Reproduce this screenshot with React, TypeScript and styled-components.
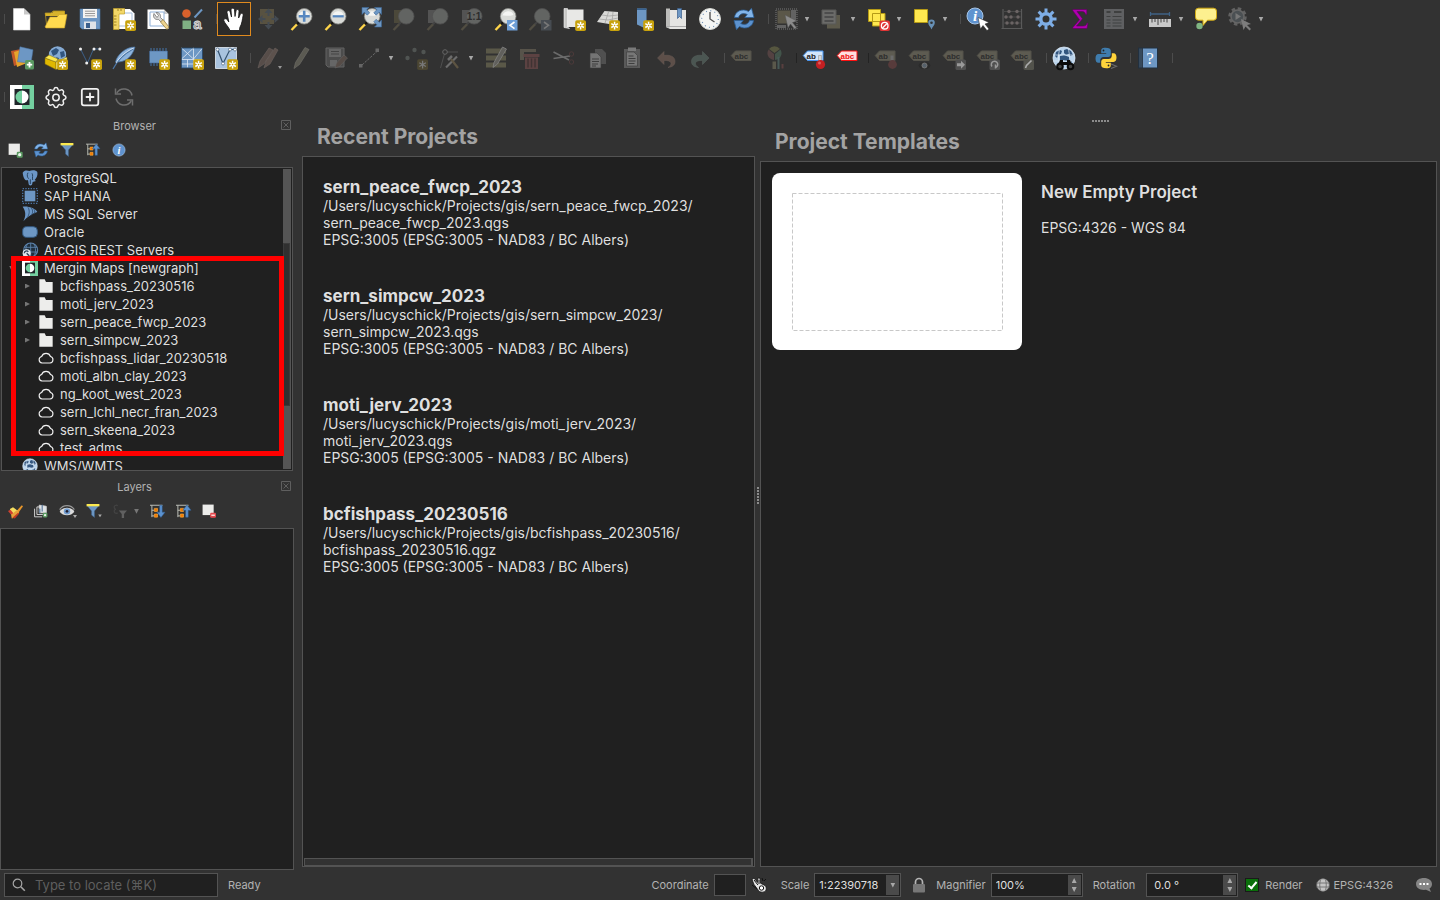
import React from "react";
import styled, { createGlobalStyle, css } from "styled-components";

const color = {
  window: "#323232",
  base: "#202020",
  line: "#535353",
  text: "#dfdfdf",
  label: "#b2b2b2",
  heading: "#a3a3a3",
  blue: "#6d97c4",
  navy: "#3a5f8c",
  gold: "#c8a20c",
};

const GlobalStyle = createGlobalStyle`
  *, *::before, *::after { box-sizing: border-box; }
  html, body { margin: 0; padding: 0; background: ${color.window}; }
  body { font-family: Inter, "Liberation Sans", sans-serif; color: ${color.text}; }
  button, input, select { font: inherit; color: inherit; margin: 0; }
  h2, h3, p, ul { margin: 0; padding: 0; }
`;

/* ---------- shared drawing parts ---------- */

const NewBadge = () => (
  <g>
    <rect x="13.2" y="13.2" width="10.8" height="10.8" rx="1.8" fill={color.gold} />
    <path d="M18.6 14.8v7.6M15.3 16.7l6.6 3.8M21.9 16.7l-6.6 3.8" stroke="#fff" strokeWidth="1.5" />
    <circle cx="18.6" cy="18.6" r=".8" fill={color.gold} />
  </g>
);

const Lens = ({ dim, children }: { dim?: boolean; children?: React.ReactNode }) => (
  <g>
    <path d="M1.5 23l5.8-6" stroke={dim ? "#514d42" : "#ffd54a"} strokeWidth="2.4" />
    <path d="M6.8 17.4l2.2-2.2" stroke={dim ? "#444" : "#111"} strokeWidth="2" />
    <circle cx="14.2" cy="9.3" r="7.8" fill={dim ? "#626462" : "#d9dbd8"} stroke={dim ? "#525252" : "#8a8c88"} strokeWidth=".8" />
    {!dim && <path d="M8.5 8.5a6 6 0 0 1 11-1c-3 2.600-7 .6-11 1z" fill="#f4f5f3" />}
    {children}
  </g>
);

const Tag = ({ fill, stroke, ink, word = "abc" }: { fill: string; stroke: string; ink: string; word?: string }) => (
  <g>
    <path d="M1.200 9.600L5.500 5h15.500v9.500h-15.500z" fill={fill} stroke={stroke} />
    <text x="4.500" y="12.500" fontFamily="Liberation Sans, sans-serif" fontWeight="700" fontSize="8" fill={ink}>{word}</text>
  </g>
);

const DimTag = ({ word }: { word?: string }) => <Tag fill="#5d5b51" stroke="#55534a" ink="#2e2e2e" word={word} />;

const MerginMark = () => (
  <g>
    <path d="M0 0h12v24H0z" fill="#fff" />
    <path d="M12 0h12v24H12z" fill="#74d0a0" />
    <path d="M4.500 4h15v16h-15z" fill="#20262a" />
    <path d="M12 5.500a6.500 6.500 0 0 0 0 13z" fill="#74d0a0" />
    <path d="M12 5.500a6.500 6.500 0 0 1 0 13z" fill="#fff" />
  </g>
);

const RefreshMark = () => (
  <g>
    <path d="M2.500 10.500C3 4.500 10 .8 16.500 4.500l3-3.200 2.500 9.200h-9.200l2.500-3C11 5.500 7.500 7 6.500 10.500z" fill="#82b4e8" stroke="#2c5f97" strokeWidth=".8" />
    <path d="M21.500 13.500C21 19.500 14 23.200 7.500 19.500l-3 3.200L2 13.500h9.200l-2.500 3c4.300 2 7.800.5 8.800-3z" fill="#5c92cf" stroke="#2c5f97" strokeWidth=".8" />
  </g>
);

const Globe = () => (
  <g>
    <circle cx="12" cy="12" r="11" fill="#b9d3ec" stroke="#d8e6f4" strokeWidth=".8" />
    <path d="M4 6l4-2 2 1-1 3-3 1-1 3-2-2zM12 4l3-1 4 2 2 4-3 1-1-2-3 1-2-2zM8 10l4-1 5 2 1 3-4 1-3-1-3 1zM16 17l4-2-1 4-3 1zM6 16l3 1 1 3-3-1z" fill="#33567f" />
    <path d="M1.500 9h21M1.500 15h21M8 2c-2 6-2 14 0 20M16 2c2 6 2 14 0 20" fill="none" stroke="#dce9f6" strokeWidth=".7" />
  </g>
);

const InfoMark = () => (
  <g>
    <circle cx="12" cy="12" r="10.500" fill="#5f93cf" stroke="#a9c6e6" strokeWidth="1" />
    <text x="12" y="18" textAnchor="middle" fontFamily="Liberation Serif, serif" fontStyle="italic" fontWeight="700" fontSize="18" fill="#fff">i</text>
  </g>
);

const FilterMark = () => (
  <g>
    <path d="M2 3h20l-7.500 9v11l-5-4v-7z" fill={color.blue} stroke={color.navy} strokeWidth=".8" />
    <path d="M1 0h22v4H1z" fill="#fce94f" />
  </g>
);

const TreeArrow = ({ down }: { down?: boolean }) => (
  <g>
    <path d="M0 2h20M3 2v19M3 10h4M3 19h4" stroke="#babdb6" strokeWidth="1.600" fill="none" />
    <path d="M7 7h5v5H7zM7 16h5v5H7z" fill="#f57900" stroke="#fcaf3e" />
    <path
      d={down ? "M15.500 2h4v11h4.500l-6.500 8.500L11 13h4.500z" : "M15.500 21h4V10h4.500l-6.500-8.500L11 10h4.500z"}
      fill="#5c92cf"
      stroke="#2f5f96"
      strokeWidth=".8"
    />
  </g>
);

const glyphs: Record<string, React.ReactNode> = {
  newFile: (
    <g>
      <path d="M3.500 1.500H14l6 6V23H3.500z" fill="#fff" stroke="#dcdcdc" strokeWidth=".6" />
      <path d="M14 1.500l6 6h-6z" fill="#c9c9c9" />
    </g>
  ),
  open: (
    <g>
      <path d="M1 6h7l1.500-2H21v5H1z" fill="#d8b32c" />
      <path d="M3 21L1.200 6H7l2-2h11.500v4" fill="none" stroke="#b3931f" strokeWidth=".8" />
      <path d="M1 20L6 10h7l2.500-2.500H23L20.500 21H2z" fill="#ffda4f" stroke="#c9a227" strokeWidth=".6" />
    </g>
  ),
  save: (
    <g>
      <path d="M2 2h20v20H4l-2-2z" fill={color.blue} stroke="#4a75a6" strokeWidth=".6" />
      <path d="M5 2h14v9H5z" fill="#f3f3f1" />
      <path d="M7 4.200h10M7 6.500h10M7 8.800h10" stroke="#999" />
      <path d="M6 14.500h12V22H6z" fill="#dfe3e8" />
      <path d="M8 16h4v5H8z" fill={color.navy} />
    </g>
  ),
  newLayout: (
    <g>
      <path d="M2 2h16l4.500 4.500V22H2z" fill="#fff" />
      <path d="M5 6h15v13H5z" fill="none" stroke="#a7bedb" />
      <path d="M1.500 1.500h11V7H7v15.500H1.500z" fill="#f3d767" stroke="#c2a12a" strokeWidth=".7" />
      <path d="M6 2v2M9 2v2M2 9h2.500M2 12h2.500M2 15h2.500M2 18h2.500" stroke="#8a6d10" strokeWidth=".8" />
      <NewBadge />
    </g>
  ),
  layoutManager: (
    <g>
      <path d="M1.500 2.500H18l4.500 4.500v15h-21z" fill="#fff" />
      <path d="M18 2.500l4.500 4.500H18z" fill="#c9c9c9" />
      <path d="M4 5h14v14H4z" fill="none" stroke="#8fb0d8" />
      <path d="M8 6.500c-1.500 4 1 6.500 4.500 6l2.500 2.500 2-2-2.500-2.500c.5-3-1.500-5.500-4.500-5l2.500 3-1.500 2z" fill="#d7d7d7" stroke="#666" strokeWidth=".7" />
      <path d="M14.500 15l2.500-2.500 6 7.500-2 2.500z" fill="#eed48f" stroke="#8d7433" strokeWidth=".7" />
    </g>
  ),
  styleManager: (
    <g>
      <circle cx="6.500" cy="6.500" r="4.300" fill="#d8612c" />
      <path d="M14.500 10.500l7.500-8" stroke={color.blue} strokeWidth="2" />
      <path d="M2.500 13.500h8.500V22H2.500z" fill="#7fb083" />
      <text x="17.500" y="22" textAnchor="middle" fontFamily="Liberation Sans, sans-serif" fontWeight="700" fontSize="15" fill="#8a8a8a" stroke="#dedede" strokeWidth=".8">a</text>
    </g>
  ),
  hand: (
    <path
      d="M8 23.500C7 20 2.500 16.500 1.800 13.500 1.500 11.500 4 11 5.500 13L6.800 15 5 5.500C4.700 3.200 7.600 2.800 8.200 5L9.500 10 9 3c0-2.200 3.200-2.400 3.500-.2L13 9.500l1-5.700c.4-2 3.200-1.600 3 .6L16.600 11l1.700-3.700c.9-1.800 3.300-.8 2.800 1.300-.8 3.900-1.100 8.400-3.300 11.900l-.3 3z"
      fill="#fff"
      stroke="#141414"
      strokeWidth=".8"
    />
  ),
  panSelection: (
    <g>
      <path d="M4 2h14v15H4z" fill="#585241" />
      <path d="M12.500 4.500v15M5 12h15" stroke="#444b52" strokeWidth="2" />
      <path d="M8.500 6l4-4.500 4 4.500zM8.500 18l4 4.500 4-4.500zM6.500 8L2 12l4.500 4zM18.500 8l4.500 4-4.500 4z" fill="#444b52" />
      <path d="M9.500 9h6v6h-6z" fill="#585241" />
    </g>
  ),
  zoomIn: <Lens><path d="M14.200 3.800v11M8.700 9.300h11" stroke="#5687c0" strokeWidth="2.600" /></Lens>,
  zoomOut: <Lens><path d="M8.700 9.300h11" stroke="#5687c0" strokeWidth="2.200" /></Lens>,
  zoomFull: (
    <g>
      <Lens />
      <path
        d="M4 .5h7L8.700 2.800l3 3-2.400 2.400-3-3L4 7.500zM23.500.5v7l-2.300-2.300-3 3-2.400-2.400 3-3L16.500.5zM23.500 20h-7l2.300-2.300-3-3 2.400-2.400 3 3 2.300-2.300z"
        fill={color.blue}
        stroke="#3c6695"
        strokeWidth=".6"
      />
    </g>
  ),
  zoomSelection: <g><path d="M2 3h12v13H2z" fill="#4b483a" /><Lens dim /></g>,
  zoomLayer: <g><path d="M2 3h12v13H2z" fill="#535353" /><Lens dim /></g>,
  zoomNative: (
    <g>
      <path d="M2 3h12v13H2z" fill="#535353" />
      <Lens dim />
      <text x="14" y="12.500" textAnchor="middle" fontFamily="Liberation Sans, sans-serif" fontWeight="700" fontSize="10" fill="#2c2c2c">1:1</text>
    </g>
  ),
  zoomLast: (
    <g>
      <Lens />
      <path d="M13 13h10.500v10.500H13z" fill="#6f9fd6" />
      <path d="M20.500 15l-4.500 3.300 4.500 3.300" fill="none" stroke="#fff" strokeWidth="1.600" />
    </g>
  ),
  zoomNext: (
    <g>
      <Lens dim />
      <path d="M13 13h10.500v10.500H13z" fill="#474c52" />
      <path d="M16 15l4.500 3.300-4.500 3.300" fill="none" stroke="#777" strokeWidth="1.600" />
    </g>
  ),
  mapView: (
    <g>
      <path d="M4 2.500h17.500V20H4z" fill="#e8e8e6" />
      <path d="M2 1.500h3.500v18.500l2 1.500-5.500-1z" fill="#c8c8c6" stroke="#f5f5f5" strokeWidth=".6" />
      <NewBadge />
    </g>
  ),
  mapView3d: (
    <g>
      <path d="M1 15L8.500 4 22 5v10l-9 2z" fill="#d9d9d7" />
      <path d="M3 12l9 1 10-2M6 8l7 1 9-1M12.500 5L9 16M17 5l-1 11" stroke="#a5a5a3" strokeWidth=".8" fill="none" />
      <NewBadge />
    </g>
  ),
  bookmarkNew: <g><path d="M7 1.500h9.500V22L7 17.500z" fill={color.blue} /><path d="M7 1.500h9.500v1.500H7z" fill="#37618f" /><NewBadge /></g>,
  bookmarks: (
    <g>
      <path d="M2 3h20v19H6l-4-2z" fill="#e4e4e2" />
      <path d="M2 1.500h4V20l-2 1-2-1z" fill="#bcbcba" />
      <path d="M2 19.500h20" stroke="#aaa" />
      <path d="M13.500 1.500h4v10l-2-2-2 2z" fill={color.blue} stroke={color.navy} strokeWidth=".7" />
    </g>
  ),
  clock: (
    <g>
      <circle cx="12" cy="12" r="10.500" fill="#f5f6f4" stroke="#d5d7d3" />
      <circle cx="12" cy="12" r="8.300" fill="none" stroke="#6d8fb5" strokeWidth="1.200" strokeDasharray="1 3.350" />
      <path d="M12 5v7l4.500 3" fill="none" stroke="#555" strokeWidth="1.400" />
    </g>
  ),
  refresh: <RefreshMark />,
  select: (
    <g>
      <path d="M2 2h21v20H2z" fill="none" stroke="#777" strokeDasharray="1 1" />
      <path d="M3.500 3.500h13v13h-13z" fill="#5b5749" />
      <path d="M17 3h5v10h-5zM3 18h9v3H3z" fill="#626262" />
      <path d="M11 8l12 6-4.500 1.500 4 5-2 1.500-4-5-2.500 4z" fill="#8b8b8b" stroke="#555" strokeWidth=".5" />
    </g>
  ),
  selectForm: (
    <g>
      <path d="M7 8h13v13.500H7z" fill="#5d5a4c" />
      <path d="M2 3h14v14H2z" fill="#6b6b69" stroke="#595957" />
      <path d="M4.500 6h9M4.500 10h9M4.500 14h9" stroke="#444" strokeWidth="1.500" />
    </g>
  ),
  deselect: (
    <g>
      <path d="M2.500 2.500h12v12h-12zM6.500 6.500h12.500v12.500H6.500z" fill="#ffe84f" stroke="#b59a16" />
      <rect x="13.500" y="13.500" width="10.500" height="10.500" rx="2" fill="#e03535" />
      <circle cx="18.700" cy="18.700" r="3.300" fill="none" stroke="#fff" strokeWidth="1.300" />
      <path d="M16.500 21l4.500-4.500" stroke="#fff" strokeWidth="1.300" />
    </g>
  ),
  selectLocation: (
    <g>
      <path d="M2.500 2.500h13v13h-13z" fill="#ffe84f" stroke="#b59a16" />
      <path d="M19.500 22.500c-1-3-3.300-4.200-3.300-6.700a3.300 3.300 0 0 1 6.600 0c0 2.500-2.300 3.700-3.300 6.700z" fill="#6790b5" />
      <circle cx="19.500" cy="15.700" r="1.300" fill="#323232" />
    </g>
  ),
  identify: (
    <g>
      <circle cx="9" cy="9" r="8" fill="#5f93cf" stroke="#a9c6e6" strokeWidth="1" />
      <text x="9" y="14" textAnchor="middle" fontFamily="Liberation Serif, serif" fontStyle="italic" fontWeight="700" fontSize="15" fill="#fff">i</text>
      <path d="M12 10.500l11 5-4 1.500 4 5-2 1.500-4-5-2.500 3.500z" fill="#fff" stroke="#222" strokeWidth=".5" />
    </g>
  ),
  abacus: (
    <g>
      <path d="M3 2v20M21.500 2v20M1.500 21.500h21" stroke="#5a5a5a" strokeWidth="1.200" fill="none" />
      <path d="M3 4.500h18M3 10h18M3 16h18" stroke="#484848" />
      <g fill="#6b6464"><circle cx="9" cy="4.500" r="1.700" /><circle cx="17" cy="4.500" r="1.700" /><circle cx="6" cy="10" r="1.700" /><circle cx="11" cy="10" r="1.700" /><circle cx="18" cy="10" r="1.700" /><circle cx="7" cy="16" r="1.700" /><circle cx="12" cy="16" r="1.700" /><circle cx="17" cy="16" r="1.700" /></g>
    </g>
  ),
  gear: (
    <g>
      <circle cx="12" cy="12" r="5.300" fill="none" stroke="#7eaee6" strokeWidth="3.600" />
      <g stroke="#7eaee6" strokeWidth="3"><path d="M12 1.500v4M12 18.500v4M1.500 12h4M18.500 12h4M4.600 4.600l2.800 2.800M16.600 16.600l2.800 2.800M19.400 4.600l-2.800 2.800M7.400 16.600l-2.800 2.800" /></g>
    </g>
  ),
  sigma: <path d="M4.800 2.500h14v5h-1.300c-.3-2-1.200-3-3.500-3H9l5.500 7.300L8.500 19H15c2.500 0 3.500-1 4-3h1l-1 5.500H4.800V20.500L11.500 12.800 4.800 3.700z" fill="#b000b0" stroke="#5d005d" strokeWidth=".6" />,
  table: (
    <g>
      <path d="M2 2h20v20H2z" fill="#5f6062" />
      <path d="M4.500 5h4M12 5h7.500" stroke="#3f4040" strokeWidth="2" />
      <path d="M4.500 9.500h4M10.500 9.500h9M4.500 13h4M10.500 13h9M4.500 16h4M10.500 16h9M4.500 19h4M10.500 19h9" stroke="#3f4040" />
    </g>
  ),
  measure: (
    <g>
      <path d="M2.500 7h19M2.500 5v4M21.500 5v4" stroke="#3f6285" strokeWidth="1.300" />
      <path d="M1 12h22v8H1z" fill="#c9c9c9" />
      <path d="M4 12v3.500M7 12v3M10 12v6M13 12v3.500M16 12v3M19 12v3.500" stroke="#444" />
    </g>
  ),
  tips: (
    <g>
      <path d="M4.500 1.200h15a3 3 0 0 1 3 3v6a3 3 0 0 1-3 3h-6l-4.500 5.300v-5.300H4.500a3 3 0 0 1-3-3v-6a3 3 0 0 1 3-3z" fill="#fdf08f" stroke="#d2aa12" />
      <circle cx="5.500" cy="19" r="3.200" fill="#80b583" />
    </g>
  ),
  runAction: (
    <g>
      <circle cx="9.500" cy="9.500" r="8" fill="none" stroke="#626262" strokeWidth="2.500" strokeDasharray="3.500 2.780" />
      <circle cx="9.500" cy="9.500" r="6.500" fill="#4b5053" stroke="#666" strokeWidth="1.600" />
      <path d="M7.500 6l5.500 3.500-5.500 3.500z" fill="#777" />
      <path d="M13 12l10 5-4 1 4 4-1.500 1.500-4-4-2 3.500z" fill="#7d7d7d" />
    </g>
  ),

  dataSource: (
    <g>
      <path d="M1 5l10-2 2 14-9 3z" fill="#c4582a" />
      <path d="M4 6l10-3 3 14-10 4z" fill="#e6a52c" />
      <path d="M10 .8l13 3-2 13.500-13.500-1.500z" fill={color.blue} stroke="#4a75a6" strokeWidth=".5" />
      <rect x="15" y="14" width="9" height="9.500" rx="1.500" fill="#5a9a62" />
      <path d="M19.500 16v5.500M16.800 18.700h5.400" stroke="#fff" strokeWidth="1.800" />
    </g>
  ),
  geopackage: (
    <g>
      <circle cx="13.500" cy="9" r="8.700" fill="#86abd4" />
      <path d="M7 5l5-3 3 2-2 4-4 2zM16 6l4-1 1 5-4 2zM12 11l3 1-1 3z" fill="#31557f" />
      <path d="M1 12l11 4v7.500L1 18z" fill="#e0b800" stroke="#80690a" strokeWidth=".5" />
      <path d="M12 16l11-5v7l-11 5.500z" fill="#fff07a" stroke="#80690a" strokeWidth=".5" />
      <path d="M1 12l4-3 9 4-2 3z" fill="#fce94f" stroke="#80690a" strokeWidth=".5" />
      <NewBadge />
    </g>
  ),
  shapefile: (
    <g>
      <path d="M2.500 3l7 14 6-14h6" fill="none" stroke="#3c5f88" strokeWidth="1" />
      <g fill="#eee"><circle cx="2.500" cy="3" r="1.500" /><circle cx="8.700" cy="17" r="1.500" /><circle cx="16" cy="3" r="1.500" /><circle cx="21.800" cy="3" r="1.500" /></g>
      <NewBadge />
    </g>
  ),
  spatialite: (
    <g>
      <path d="M23 1C13 1 5 9 3.500 16c8 .5 16-3 19.500-15z" fill="#8db3dc" stroke="#48719f" strokeWidth=".7" />
      <path d="M21 3C12 8 5 15 1 23" fill="none" stroke="#4c76a4" strokeWidth="1.200" />
      <path d="M21.500 2C13 6 7 12 4 17" fill="none" stroke="#e7eff8" strokeWidth=".8" />
      <NewBadge />
    </g>
  ),
  memory: (
    <g>
      <path d="M5 2v18M8 2v18M11 2v18M14 2v18M17 2v18M20 2v18" stroke="#436a96" strokeWidth="1.200" />
      <path d="M3.500 5h18v12h-18z" fill={color.blue} stroke={color.navy} strokeWidth=".5" />
      <NewBadge />
    </g>
  ),
  mesh: (
    <g>
      <path d="M1.500 2h21v20h-21z" fill={color.blue} />
      <path d="M1.500 2l12 11M1.500 13L13.500 2M22.500 2l-9 11M13.500 2v20M1.500 13.500h21M1.500 18h12M7.500 13.500v8" stroke="#dfe9f4" strokeWidth=".8" />
      <path d="M1.500 2h21v20h-21z" fill="none" stroke="#244669" strokeWidth=".8" />
      <NewBadge />
    </g>
  ),
  virtual: (
    <g>
      <path d="M1.500 1.500h21v21h-21z" fill="#a9c3df" stroke="#e6eef6" strokeWidth=".8" />
      <path d="M3.500 3.500l5.500 14L16 3.500h5" fill="none" stroke="#34516f" strokeWidth="1.200" />
      <g fill="#fff" stroke="#34516f" strokeWidth=".6"><circle cx="3.500" cy="3.500" r="1.500" /><circle cx="9" cy="17.500" r="1.500" /><circle cx="16" cy="3.500" r="1.500" /><circle cx="21" cy="3.500" r="1.500" /></g>
      <NewBadge />
    </g>
  ),
  pencils: (
    <g>
      <path d="M2 22l2-7L13 2l4 2-9 14z" fill="#574d49" stroke="#6b625e" strokeWidth=".6" />
      <path d="M8 22l2-7L19 2l3 2-8 14z" fill="#5d524d" stroke="#6b625e" strokeWidth=".6" />
      <path d="M22 20h4l-2 3z" fill="#999" />
    </g>
  ),
  pencil: <path d="M4 22.500l1.500-6L15 1.500l4 2-9.500 15z" fill="#5b5a52" stroke="#6d6c66" strokeWidth=".7" />,
  saveEdits: (
    <g>
      <path d="M2 2h18v19H4l-2-2z" fill="#4c4c4c" stroke="#626262" />
      <path d="M5 3h12v8H5zM6 14h7v6H6z" fill="#666" />
      <path d="M7 5.500h8M7 8h8" stroke="#444" />
      <path d="M11 22l1.500-5L20 9l3.500 3-8 8.500z" fill="#564c47" stroke="#666" strokeWidth=".5" />
    </g>
  ),
  digitize: (
    <g>
      <path d="M4 19L20 4.500" stroke="#6b6b6b" strokeDasharray="2.500 1.200" />
      <path d="M1 18h3.500v3.500H1zM17.500 2.500H21V6h-3.500z" fill="#666" />
    </g>
  ),
  addPoint: (
    <g>
      <g fill="#505452"><circle cx="10.500" cy="4" r="2.200" /><circle cx="19.500" cy="6" r="2.200" /><circle cx="3.500" cy="12" r="2.200" /></g>
      <rect x="13.200" y="13.200" width="10.800" height="10.800" rx="1.800" fill="#4c4632" />
      <path d="M18.600 14.800v7.600M15.300 16.700l6.600 3.800M21.900 16.700l-6.600 3.800" stroke="#777" strokeWidth="1.300" />
    </g>
  ),
  vertexTool: (
    <g>
      <path d="M2.500 22L7 6h13" fill="none" stroke="#4f4f4f" />
      <circle cx="7" cy="6" r="2.300" fill="#323232" stroke="#666" />
      <path d="M8 21.500l11-11" fill="none" stroke="#6c6c6c" strokeWidth="2.200" />
      <path d="M13 13l7 9" stroke="#5d5442" strokeWidth="2.200" />
      <path d="M10 14l4-4" stroke="#6c6c6c" strokeWidth="2.500" />
    </g>
  ),
  attributes: (
    <g>
      <path d="M2 2.500h20v5H2zM2 9.500h20v5H2zM2 16.500h20v5H2z" fill="#5a5848" />
      <path d="M9 21.500l1-5L18.500 1l4 2-9 15z" fill="#61605c" stroke="#888" strokeWidth=".7" />
    </g>
  ),
  trash: (
    <g>
      <path d="M2 3h16v3H6v8H2z" fill="#57534a" />
      <path d="M5.500 8h16v3h-16zM7 11.500h13V23H7z" fill="#5c4242" />
      <path d="M10 12.500v9M13.500 12.500v9M17 12.500v9" stroke="#3f3333" strokeWidth="1.400" />
    </g>
  ),
  cut: (
    <g>
      <path d="M1.500 6L17 14M1.500 12.500L18 10" stroke="#6b6b6b" strokeWidth="1.600" />
      <circle cx="19.500" cy="8" r="2.200" fill="none" stroke="#4c3a3a" strokeWidth="1" />
      <circle cx="19.500" cy="16" r="2.200" fill="none" stroke="#4c3a3a" strokeWidth="1" />
    </g>
  ),
  copy: (
    <g>
      <path d="M9 3h7l4 4v11H9z" fill="#505050" />
      <path d="M4 7h7l4 4v11H4z" fill="#747474" stroke="#3b3b3b" strokeWidth=".6" />
      <path d="M6 13h7M6 15.500h7M6 18h6M6 20h4" stroke="#3e3e3e" />
    </g>
  ),
  paste: (
    <g>
      <path d="M4 3h16v19H4z" fill="#595959" />
      <path d="M8 1.500h8V5H8z" fill="#7a7a7a" />
      <path d="M6.500 6H14l3.500 3.500V20h-11z" fill="#777" stroke="#3b3b3b" strokeWidth=".6" />
      <path d="M8.500 10h5M8.500 12.500h7M8.500 15h7M8.500 17.500h6" stroke="#3e3e3e" />
    </g>
  ),
  undo: <path d="M3.500 12L10 5.500v4c6-1 11 1 11 6 0 4-3 5.500-7 6 5-3 4-7.500-4-7v4z" fill="#5d4f49" stroke="#6b5d57" strokeWidth=".5" />,
  redo: <path d="M21 12l-6.500-6.500v4c-6-1-11 1-11 6 0 4 3 5.500 7 6-5-3-4-7.500 4-7v4z" fill="#4b5652" stroke="#59635f" strokeWidth=".5" />,
  labelDim: <DimTag />,
  diagram: (
    <g>
      <path d="M5 3a7 7 0 0 1 11 0l-5.500 4z" fill="#56563f" />
      <path d="M4.500 3.500L10 8v6C4 13 2 8 4.500 3.500z" fill="#544242" />
      <path d="M16.500 3.500L11 8v6c6-1 8-6 5.500-10.500z" fill="#42544a" />
      <path d="M8.500 15.500h3.500V23H8.500z" fill="#5a584b" /><path d="M13.500 11h2v12h-2z" fill="#475a58" /><path d="M17.500 18h2v4.500h-2z" fill="#583f3f" />
    </g>
  ),
  labelPin: (
    <g>
      <Tag fill="#d3e6fb" stroke="#4794f0" ink="#222" word="ab" />
      <path d="M16.500 9.500h3V17h-3z" fill="#d8d8d8" stroke="#888" strokeWidth=".5" />
      <circle cx="18.500" cy="18.500" r="4.600" fill="#c41f22" />
      <circle cx="17.500" cy="17" r="1.500" fill="#dd5a5a" />
    </g>
  ),
  labelRed: <g><Tag fill="#ffdede" stroke="#ff1111" ink="#ee1111" /></g>,
  labelPinDim: (
    <g>
      <DimTag word="ab" />
      <path d="M16.500 9.500h3V17h-3z" fill="#6b6b6b" />
      <circle cx="18.500" cy="18.500" r="4.400" fill="#573b3b" />
    </g>
  ),
  labelShow: (
    <g>
      <DimTag />
      <ellipse cx="16.500" cy="19.500" rx="6" ry="3.500" fill="#2b2b2b" />
      <circle cx="16.500" cy="19.500" r="2.500" fill="#56616b" stroke="#777" />
    </g>
  ),
  labelMove: <g><DimTag /><rect x="13.500" y="13.500" width="10.500" height="10.500" rx="1.500" fill="#505050" /><path d="M15 17.200h4v-2.500l4 4-4 4v-2.500h-4z" fill="#999" /></g>,
  labelRotate: <g><DimTag /><rect x="13.500" y="13.500" width="10.500" height="10.500" rx="1.500" fill="#505050" /><path d="M16 20.500a3.200 3.200 0 1 1 3 1.200M19.500 18.500v4" fill="none" stroke="#999" strokeWidth="1.500" /></g>,
  labelChange: <g><DimTag /><rect x="13.500" y="13.500" width="10.500" height="10.500" rx="1.500" fill="#53534c" /><path d="M15.500 22l1-2.500 5-5" fill="none" stroke="#aaa" strokeWidth="1.600" /></g>,
  metasearch: (
    <g>
      <Globe />
      <path d="M8 14h3v2h4v-2h3l2 5H6z" fill="#0b0b0b" />
      <circle cx="8" cy="20.500" r="2.800" fill="#444" stroke="#0b0b0b" strokeWidth="2" />
      <circle cx="18.500" cy="20.500" r="2.800" fill="#444" stroke="#0b0b0b" strokeWidth="2" />
    </g>
  ),
  python: (
    <g>
      <path d="M11.500 1.800c-4 0-4.300 1.500-4.300 3v2.500h5v.8H4.500c-2 0-3 1.700-3 4.400s1 4.300 2.700 4.300h2v-2.500c0-2 1.500-3.300 3.300-3.300h4.700c1.500 0 2.600-1.200 2.600-2.700V4.800c0-2-1.700-3-5.300-3z" fill="#3f7cad" />
      <path d="M12.500 22.300c4 0 4.300-1.500 4.300-3v-2.500h-5V16h7.700c2 0 3-1.700 3-4.400s-1-4.300-2.700-4.300h-2v2.500c0 2-1.500 3.300-3.300 3.300H9.800c-1.500 0-2.600 1.200-2.600 2.700v3.500c0 2 1.700 3 5.300 3z" fill="#ffd43b" />
      <circle cx="9.500" cy="4.500" r=".9" fill="#222" /><circle cx="14.500" cy="19.500" r=".9" fill="#222" />
      <path d="M17 18l5.500 2.300L17 22.500" fill="none" stroke="#6b6b6b" strokeWidth="1.100" />
    </g>
  ),
  help: (
    <g>
      <path d="M2 1.500h20v21H2z" fill="#22303f" />
      <path d="M3 2.500h3.500v19H3z" fill="#36495c" />
      <path d="M7 2.500h14v19H7z" fill={color.blue} />
      <text x="14" y="17.500" textAnchor="middle" fontFamily="Liberation Serif, serif" fontSize="17" fill="#fff">?</text>
    </g>
  ),

  mergin: <MerginMark />,
  cog: (
    <g fill="none" stroke="#f2f2f2" strokeWidth="1.500" strokeLinejoin="round">
      <path d="M10 4.200c.5-2.200 3.500-2.200 4 0 .3 1.100 1.400 1.500 2.400 1 2-1.100 4 .9 2.900 2.900-.6 1-.1 2.100 1 2.400 2.200.5 2.200 3.500 0 4-1.100.3-1.600 1.400-1 2.400 1.100 2-.9 4-2.900 2.900-1-.6-2.100-.1-2.400 1-.5 2.200-3.500 2.200-4 0-.3-1.100-1.400-1.600-2.400-1-2 1.100-4-.9-2.900-2.900.6-1 .1-2.100-1-2.400-2.200-.5-2.200-3.500 0-4 1.100-.3 1.600-1.400 1-2.400-1.100-2 .9-4 2.900-2.900 1 .5 2.100.1 2.400-1z" />
      <circle cx="12" cy="12.500" r="3.200" />
    </g>
  ),
  addBox: (
    <g fill="none" stroke="#f2f2f2" strokeWidth="1.800" strokeLinecap="round">
      <rect x="3.800" y="3.800" width="16.500" height="16.500" rx="2" />
      <path d="M12 8.500v7M8.500 12h7" />
    </g>
  ),
  sync: (
    <g fill="none" stroke="#6e6e6e" strokeWidth="1.500">
      <path d="M20 10.500A8.300 8.300 0 0 0 4.800 8M4 13.500A8.300 8.300 0 0 0 19.200 16" />
      <path d="M3.500 3.500v5.500H9M20.500 20.500V15H15" />
    </g>
  ),

  addLayer: (
    <g>
      <path d="M1 1h18v18H1z" fill="#ececea" />
      <rect x="14" y="14" width="9.500" height="9.500" rx="2" fill="#5b9a62" />
      <circle cx="18.700" cy="18.700" r="2.600" fill="#e9f3ea" />
    </g>
  ),
  filter: <FilterMark />,
  filterMenu: <g><FilterMark /><path d="M21 18h6l-3 4.500z" fill="#aaa" /></g>,
  collapse: <TreeArrow />,
  expand: <TreeArrow down />,
  info: <InfoMark />,
  styling: (
    <g>
      <path d="M12 13L22 2l2 1.500L16 15z" fill="#e8962a" />
      <path d="M3 8l5-3 8 6-4 5-7 1z" fill="#f3dc60" />
      <path d="M0 11l4-2 5 6-4 2z" fill="#d1402f" />
      <path d="M5 17l9-7 4 4-8 8-4 1z" fill="#e8a03a" />
      <path d="M7 22l9-8 2 1-7 8z" fill="#c43a22" />
    </g>
  ),
  addGroup: (
    <g fill="none" stroke="#d8d8d8" strokeWidth="1.600">
      <path d="M1 8v14h13M5 5v13h13V5z" /><path d="M9 2v13h12V4z" fill="#dfe3e6" /><path d="M14 1v12M10 8v8" stroke="#3a5f8c" />
      <rect x="15" y="15" width="8" height="8" rx="2" fill="#5b9a62" stroke="none" />
      <circle cx="19" cy="19" r="2" fill="#e9f3ea" stroke="none" />
    </g>
  ),
  eye: (
    <g>
      <path d="M1 10C6 2 18 2 23 10" fill="none" stroke="#999" strokeWidth="1.800" />
      <path d="M1 13C6 5 18 5 23 13c-5 7-17 7-22 0z" fill="#dcdcdc" />
      <circle cx="12" cy="12.500" r="4.800" fill="#6f9bd0" /><circle cx="12" cy="12.500" r="2" fill="#223" />
      <path d="M21 18h6l-3 4.500z" fill="#aaa" />
    </g>
  ),
  filterExpr: (
    <g>
      <path d="M10 11h14l-5 6v7h-4v-7z" fill="#606060" />
      <path d="M8 3a3.500 3.500 0 1 0-3 6 3.500 3.500 0 1 0 3 6" fill="none" stroke="#444" strokeWidth="2" />
    </g>
  ),
  removeLayer: (
    <g>
      <path d="M1 1h19v18H1z" fill="#ececea" />
      <rect x="14" y="15" width="10" height="8.500" rx="2" fill="#e5484d" />
      <path d="M16 19.200h6" stroke="#fff" strokeWidth="2" />
    </g>
  ),

  postgres: (
    <g>
      <path d="M1 4C3 0 8 0 11 1.500c4-1.500 10-1.500 12 1.500 1 5-1 9-4 12l2 1.500-5 1.500-1 4c-2 2-5 1-5-1l-1-6c-5 2-7-4-8-11z" fill="#6b96c6" />
      <path d="M9 4c-2 4-1 7 1 9M15 5c2 3 0 6 1 10M12.500 14v7" fill="none" stroke="#27435f" strokeWidth="1.500" />
    </g>
  ),
  hana: (
    <g>
      <path d="M1 1h22v22H1z" fill="none" stroke="#4b74a3" strokeWidth="2" strokeDasharray="2 2" />
      <path d="M4 4h16v16H4z" fill={color.blue} />
    </g>
  ),
  mssql: (
    <g>
      <path d="M1 1c10-1 19 3 22 8-7 2-15 7-21 14 4-8 4-15-1-22z" fill="#6b96c6" />
      <path d="M9 2c3 5 2 11-1 15M14 3c3 4 2 8 0 11M18 5c2 3 1 5 0 7" fill="none" stroke="#2b4969" strokeWidth="1.200" />
    </g>
  ),
  oracle: <rect x="1" y="4" width="22" height="16" rx="6" fill={color.blue} stroke="#33587f" strokeWidth="1.500" />,
  arcgis: (
    <g>
      <circle cx="13" cy="12" r="10.500" fill="#20303f" stroke="#5d84ae" strokeWidth="1.600" />
      <path d="M3 8h20M3 15h20M13 1.500v21M8 3c-3 6-3 12 0 18M18 3c3 6 3 12 0 18" fill="none" stroke="#5d84ae" strokeWidth="1.300" />
      <circle cx="7" cy="17" r="6" fill="#e0e6ec" />
      <path d="M3.500 17a3.500 3.500 0 0 1 6-2.500M7 17l4 4" stroke="#2b4058" strokeWidth="2" fill="none" />
    </g>
  ),
  folder: <path d="M2 2h8l2 4h10v16H2z" fill="#ededeb" />,
  cloud: <path d="M6 19.500a5 5 0 0 1-.5-9.800 7 7 0 0 1 13.200 0 5 5 0 0 1-.7 9.800z" fill="none" stroke="#f0f0f0" strokeWidth="1.700" />,
  wms: <Globe />,
};

/* ---------- controls ---------- */

const Svg = styled.svg<{ $size: number }>`
  display: block;
  flex: none;
  width: ${(p) => p.$size}px;
  height: ${(p) => p.$size}px;
  overflow: visible;
`;

const Glyph = ({ name, size = 24 }: { name: string; size?: number }) => (
  <Svg $size={size} viewBox="0 0 24 24" aria-hidden="true">{glyphs[name]}</Svg>
);

const Triangle = styled.span<{ $dir?: "up" | "down" | "right"; $tone?: string }>`
  display: block;
  flex: none;
  width: 5px;
  height: 5px;
  background: ${(p) => p.$tone || "#a8a8a8"};
  clip-path: ${(p) =>
    p.$dir === "up"
      ? "polygon(0 100%, 50% 0, 100% 100%)"
      : p.$dir === "right"
      ? "polygon(0 0, 100% 50%, 0 100%)"
      : "polygon(0 0, 100% 0, 50% 100%)"};
`;

const Window = styled.div`
  display: flex;
  flex-direction: column;
  height: 100vh;
  min-height: 640px;
  min-width: 1300px;
  overflow: hidden;
`;

const ToolBars = styled.header`
  flex: none;
`;

const ToolRow = styled.div`
  display: flex;
  height: 39px;
  padding: 2px 0 0 5px;
`;

const Handle = styled.span<{ $kind: "first" | "grip" | "thin" }>`
  flex: none;
  width: ${(p) => (p.$kind === "thin" ? 4 : p.$kind === "grip" ? 8 : 1)}px;
  margin-left: ${(p) => (p.$kind === "first" ? -1 : 0)}px;
  height: 10px;
  margin-top: 12px;
  border-right: 1px solid ${(p) => (p.$kind === "thin" ? "#232323" : "#4c4c4c")};
`;

const ToolButton = styled.button<{ $menu?: boolean; $active?: boolean }>`
  display: flex;
  flex: none;
  align-items: center;
  gap: 2px;
  width: ${(p) => (p.$menu ? 46 : 34)}px;
  height: 34px;
  padding: 0 0 0 4px;
  border: 1px solid transparent;
  background: none;
  ${(p) =>
    p.$active &&
    css`
      border-color: #e08a1e;
      background: #2c2b2a;
    `}
`;

type Tool = string | { glyph: string; label: string; menu?: boolean; active?: boolean; disabled?: boolean };

const tool = (glyph: string, label: string, opts: { menu?: boolean; active?: boolean; disabled?: boolean } = {}): Tool => ({ glyph, label, ...opts });
const off = { disabled: true };

const rows: { name: string; tools: Tool[] }[] = [
  {
    name: "Project and navigation",
    tools: [
      "first",
      tool("newFile", "New Project"),
      tool("open", "Open Project"),
      tool("save", "Save Project"),
      tool("newLayout", "New Print Layout"),
      tool("layoutManager", "Layout Manager"),
      tool("styleManager", "Style Manager"),
      "grip",
      tool("hand", "Pan Map", { active: true }),
      tool("panSelection", "Pan to Selection", off),
      tool("zoomIn", "Zoom In"),
      tool("zoomOut", "Zoom Out"),
      tool("zoomFull", "Zoom Full"),
      tool("zoomSelection", "Zoom to Selection", off),
      tool("zoomLayer", "Zoom to Layer", off),
      tool("zoomNative", "Zoom to Native Resolution", off),
      tool("zoomLast", "Zoom Last"),
      tool("zoomNext", "Zoom Next", off),
      tool("mapView", "New Map View"),
      tool("mapView3d", "New 3D Map View"),
      tool("bookmarkNew", "New Spatial Bookmark"),
      tool("bookmarks", "Show Spatial Bookmarks"),
      tool("clock", "Temporal Controller"),
      tool("refresh", "Refresh"),
      "grip",
      tool("select", "Select Features", { menu: true, disabled: true }),
      tool("selectForm", "Select by Value", { menu: true, disabled: true }),
      tool("deselect", "Deselect Features", { menu: true }),
      tool("selectLocation", "Select by Location", { menu: true }),
      "grip",
      tool("identify", "Identify Features"),
      tool("abacus", "Field Calculator", off),
      tool("gear", "Toolbox"),
      tool("sigma", "Statistical Summary"),
      tool("table", "Attribute Table", { menu: true, disabled: true }),
      tool("measure", "Measure", { menu: true }),
      tool("tips", "Map Tips"),
      tool("runAction", "Run Feature Action", { menu: true, disabled: true }),
    ],
  },
  {
    name: "Data and digitizing",
    tools: [
      "first",
      tool("dataSource", "Data Source Manager"),
      tool("geopackage", "New GeoPackage Layer"),
      tool("shapefile", "New Shapefile Layer"),
      tool("spatialite", "New SpatiaLite Layer"),
      tool("memory", "New Temporary Scratch Layer"),
      tool("mesh", "New Mesh Layer"),
      tool("virtual", "New Virtual Layer"),
      "grip",
      tool("pencils", "Current Edits", off),
      tool("pencil", "Toggle Editing", off),
      tool("saveEdits", "Save Layer Edits", off),
      tool("digitize", "Digitize with Segment", { menu: true, disabled: true }),
      tool("addPoint", "Add Feature", off),
      tool("vertexTool", "Vertex Tool", { menu: true, disabled: true }),
      tool("attributes", "Modify Attributes", off),
      tool("trash", "Delete Selected", off),
      tool("cut", "Cut Features", off),
      tool("copy", "Copy Features", off),
      tool("paste", "Paste Features", off),
      tool("undo", "Undo", off),
      tool("redo", "Redo", off),
      "grip",
      tool("labelDim", "Layer Labeling Options", off),
      tool("diagram", "Layer Diagram Options", off),
      "thin",
      tool("labelPin", "Highlight Pinned Labels"),
      tool("labelRed", "Show Unplaced Labels"),
      "thin",
      tool("labelPinDim", "Pin Labels", off),
      tool("labelShow", "Show Labels", off),
      tool("labelMove", "Move Label", off),
      tool("labelRotate", "Rotate Label", off),
      tool("labelChange", "Change Label", off),
      "grip",
      tool("metasearch", "MetaSearch"),
      "grip",
      tool("python", "Python Console"),
      "grip",
      tool("help", "Help Contents"),
      "grip",
    ],
  },
  {
    name: "Mergin Maps",
    tools: [
      "first",
      tool("mergin", "Mergin Maps"),
      tool("cog", "Configure Mergin Maps"),
      tool("addBox", "Create Mergin Maps Project"),
      tool("sync", "Synchronise", off),
    ],
  },
];

/* ---------- work area ---------- */

const WorkArea = styled.main`
  display: flex;
  flex: 1;
  min-height: 0;
  padding-right: 3px;
`;

const Dock = styled.aside`
  display: flex;
  flex: none;
  flex-direction: column;
  width: 294px;
  margin-right: 8px;
`;

const DockTitle = styled.div`
  display: flex;
  flex: none;
  height: 18px;
  padding: 0 3px 0 0;

  h2 {
    flex: 1;
    padding: 0 12px 0 0;
    font-size: 11px;
    font-weight: 400;
    line-height: 18px;
    text-align: center;
    color: ${color.label};
  }
`;

const CloseButton = styled.button`
  width: 10px;
  height: 10px;
  margin-top: 3px;
  padding: 0;
  border: 0;
  background: none;

  svg {
    display: block;
  }
`;

const DockTools = styled.div`
  display: flex;
  flex: none;
  height: 32px;
  padding: 2px 0 0 2px;
`;

const DockButton = styled.button<{ $menu?: boolean }>`
  display: flex;
  align-items: center;
  justify-content: ${(p) => (p.$menu ? "space-between" : "center")};
  width: ${(p) => (p.$menu ? 38 : 26)}px;
  height: 26px;
  padding: ${(p) => (p.$menu ? "0 5px 0 7px" : "0")};
  border: 0;
  background: none;
`;

const TreeBox = styled.div`
  position: relative;
  display: flex;
  flex: 304 1 0;
  min-height: 0;
  margin: 0 1px 7px 1px;
  border: 1px solid ${color.line};
  background: ${color.base};
  overflow: hidden;
`;

const Tree = styled.ul`
  flex: 1;
  padding-top: 1px;
  list-style: none;
`;

const TreeRow = styled.li<{ $depth: number }>`
  display: flex;
  align-items: center;
  height: 18px;
  padding-left: ${(p) => 4 + p.$depth * 16}px;
  font-size: 13px;
  line-height: 18px;
  white-space: nowrap;
`;

const Expander = styled.span`
  flex: none;
  width: 16px;
  padding-left: 3px;
`;

const RowText = styled.span`
  margin-left: 6px;
`;

const ScrollTrack = styled.div`
  flex: none;
  width: 8px;
  margin: 1px 1px 1px 0;
  padding-top: 74px;
  background: #555;
`;

const ScrollThumb = styled.div`
  width: 7px;
  height: 163px;
  border: 1px solid #3b3b3b;
  background: #303030;
`;

const Highlight = styled.div`
  position: absolute;
  left: 9px;
  top: 88px;
  width: 273px;
  height: 200px;
  border: 5px solid #ff0000;
  pointer-events: none;
`;

const LayersBox = styled.div`
  flex: 342 1 0;
  min-height: 0;
  border: 1px solid ${color.line};
  background: ${color.base};
`;

const Column = styled.section<{ $grow: number }>`
  display: flex;
  flex: ${(p) => p.$grow} 1 0;
  flex-direction: column;
  min-width: 0;
  padding-bottom: 3px;
`;

const ColumnHeading = styled.h2`
  flex: none;
  padding-left: 15px;
  font-size: 21px;
  font-weight: 700;
  line-height: 39px;
  color: ${color.heading};
`;

const Panel = styled.div`
  display: flex;
  flex: 1;
  flex-direction: column;
  min-height: 0;
  border: 1px solid ${color.line};
  background: ${color.base};
`;

const Grip = styled.div<{ $vertical?: boolean }>`
  display: flex;
  flex: none;
  flex-direction: ${(p) => (p.$vertical ? "column" : "row")};
  align-items: ${(p) => (p.$vertical ? "center" : "flex-end")};
  justify-content: center;
  gap: 1px;
  ${(p) => (p.$vertical ? "width: 5px; padding-top: 4px;" : "height: 5px; padding-left: 3px;")}
  i {
    width: 2px;
    height: 2px;
    background: #8c8c8c;
  }
`;

const ProjectList = styled.ul`
  display: flex;
  flex: 1;
  flex-direction: column;
  gap: 38px;
  min-height: 0;
  padding: 20px;
  list-style: none;
  overflow: hidden;
`;

const ItemTitle = styled.h3`
  font-size: 17px;
  font-weight: 700;
  line-height: 20px;
`;

const ItemText = styled.p`
  font-size: 14px;
  line-height: 17px;
`;

const HorizontalBar = styled.div`
  flex: none;
  height: 8px;
  margin: 0 1px;
  border: 1px solid ${color.line};
  border-right-width: 2px;
  background: ${color.window};
`;

const Template = styled.div`
  display: flex;
  gap: 19px;
  padding: 11px;

  ${ItemTitle} {
    margin: 9px 0 17px;
    font-weight: 600;
  }
`;

const Preview = styled.div`
  flex: none;
  width: 250px;
  height: 177px;
  padding: 20px 19px 19px 20px;
  border-radius: 8px;
  background: #fff;

  svg {
    display: block;
    width: 100%;
    height: 100%;
  }
`;

/* ---------- status bar ---------- */

const StatusBar = styled.footer`
  display: flex;
  flex: none;
  align-items: center;
  height: 30px;
  padding: 0 8px 0 4px;
  font-size: 11px;
  line-height: 16px;
  color: ${color.label};
`;

const Locator = styled.label`
  display: flex;
  align-items: center;
  gap: 9px;
  width: 214px;
  height: 24px;
  margin-right: 10px;
  padding: 0 7px;
  border: 1px solid ${color.line};
  background: ${color.base};

  input {
    flex: 1;
    min-width: 0;
    padding: 0;
    border: 0;
    outline: 0;
    background: none;
    font-size: 13px;
  }
  input::placeholder {
    color: #5e5e5e;
    opacity: 1;
  }
`;

const Spacer = styled.span`
  flex: 1;
`;

const Field = styled.div<{ $gap: number; $inner?: number }>`
  display: flex;
  align-items: center;
  gap: ${(p) => p.$inner ?? 5}px;
  margin-right: ${(p) => p.$gap}px;
`;

const CoordinateInput = styled.input`
  width: 32px;
  height: 22px;
  padding: 0 2px;
  border: 1px solid ${color.line};
  background: ${color.base};
`;

const FieldBox = styled.div<{ $w: number; $indent?: number }>`
  display: flex;
  width: ${(p) => p.$w}px;
  height: 24px;
  padding: 1px;
  border: 1px solid ${color.line};
  background: ${color.base};
  color: ${color.text};

  input,
  select {
    flex: 1;
    min-width: 0;
    padding: 0 0 0 ${(p) => p.$indent ?? 3}px;
    border: 0;
    outline: 0;
    background: none;
    appearance: none;
  }
`;

const ArrowCap = styled.span`
  display: flex;
  flex: none;
  flex-direction: column;
  align-items: center;
  justify-content: center;
  gap: 4px;
  width: 13px;
  background: #4a4a4a;

  button {
    padding: 0;
    border: 0;
    background: none;
  }
`;

const Check = styled.label`
  display: flex;
  align-items: center;
  gap: 6px;
  margin-right: 14px;

  input {
    display: grid;
    place-content: center;
    width: 14px;
    height: 14px;
    appearance: none;
    border: 1px solid #1a1a1a;
    background: #0b6f0b;
  }
  input:checked::after {
    content: "";
    width: 5px;
    height: 9px;
    margin-bottom: 2px;
    border: solid #fff;
    border-width: 0 2px 2px 0;
    transform: rotate(40deg);
  }
`;

const StatusButton = styled.button<{ $gap: number }>`
  display: flex;
  align-items: center;
  gap: 3px;
  margin-right: ${(p) => p.$gap}px;
  padding: 0;
  border: 0;
  background: none;
`;

const tree: { text: string; glyph: string; depth: number; expand?: "down" | "right" }[] = [
  { text: "PostgreSQL", glyph: "postgres", depth: 0 },
  { text: "SAP HANA", glyph: "hana", depth: 0 },
  { text: "MS SQL Server", glyph: "mssql", depth: 0 },
  { text: "Oracle", glyph: "oracle", depth: 0 },
  { text: "ArcGIS REST Servers", glyph: "arcgis", depth: 0 },
  { text: "Mergin Maps [newgraph]", glyph: "mergin", depth: 0, expand: "down" },
  { text: "bcfishpass_20230516", glyph: "folder", depth: 1, expand: "right" },
  { text: "moti_jerv_2023", glyph: "folder", depth: 1, expand: "right" },
  { text: "sern_peace_fwcp_2023", glyph: "folder", depth: 1, expand: "right" },
  { text: "sern_simpcw_2023", glyph: "folder", depth: 1, expand: "right" },
  { text: "bcfishpass_lidar_20230518", glyph: "cloud", depth: 1 },
  { text: "moti_albn_clay_2023", glyph: "cloud", depth: 1 },
  { text: "ng_koot_west_2023", glyph: "cloud", depth: 1 },
  { text: "sern_lchl_necr_fran_2023", glyph: "cloud", depth: 1 },
  { text: "sern_skeena_2023", glyph: "cloud", depth: 1 },
  { text: "test_adms", glyph: "cloud", depth: 1 },
  { text: "WMS/WMTS", glyph: "wms", depth: 0 },
];

const projects = [
  { name: "sern_peace_fwcp_2023", ext: "qgs" },
  { name: "sern_simpcw_2023", ext: "qgs" },
  { name: "moti_jerv_2023", ext: "qgs" },
  { name: "bcfishpass_20230516", ext: "qgz" },
];

const DockHeader = ({ title }: { title: string }) => (
  <DockTitle>
    <h2>{title}</h2>
    <CloseButton aria-label={`Close ${title}`}>
      <svg width="10" height="10" viewBox="0 0 10 10" fill="none" stroke="#5f5f5f">
        <path d="M.5.5h9v9h-9z" />
        <path d="M2.500 2.500l5 5M7.500 2.500l-5 5" />
      </svg>
    </CloseButton>
  </DockTitle>
);

const Stepper = () => (
  <ArrowCap>
    <button aria-label="Increase"><Triangle $dir="up" /></button>
    <button aria-label="Decrease"><Triangle /></button>
  </ArrowCap>
);

export default function App() {
  return (
    <Window>
      <GlobalStyle />
      <ToolBars>
        {rows.map((row) => (
          <ToolRow key={row.name} role="toolbar" aria-label={row.name}>
            {row.tools.map((t, i) =>
              typeof t === "string" ? (
                <Handle key={i} $kind={t as "first" | "grip" | "thin"} />
              ) : (
                <ToolButton key={i} aria-label={t.label} disabled={t.disabled} $menu={t.menu} $active={t.active}>
                  <Glyph name={t.glyph} />
                  {t.menu && <Spacer />}
                  {t.menu && <Triangle />}
                  {t.menu && <Spacer />}
                </ToolButton>
              )
            )}
          </ToolRow>
        ))}
      </ToolBars>

      <WorkArea>
        <Dock>
          <DockHeader title="Browser" />
          <DockTools>
            <DockButton aria-label="Add Selected Layers"><Glyph name="addLayer" size={15} /></DockButton>
            <DockButton aria-label="Refresh"><Glyph name="refresh" size={16} /></DockButton>
            <DockButton aria-label="Filter Browser"><Glyph name="filter" size={14} /></DockButton>
            <DockButton aria-label="Collapse All"><Glyph name="collapse" size={14} /></DockButton>
            <DockButton aria-label="Properties"><Glyph name="info" size={14} /></DockButton>
          </DockTools>
          <TreeBox>
            <Tree>
              {tree.map((n) => (
                <TreeRow key={n.text} $depth={n.depth}>
                  <Expander>{n.expand && <Triangle $dir={n.expand} $tone="#757575" />}</Expander>
                  <Glyph name={n.glyph} size={16} />
                  <RowText>{n.text}</RowText>
                </TreeRow>
              ))}
            </Tree>
            <ScrollTrack><ScrollThumb /></ScrollTrack>
            <Highlight />
          </TreeBox>

          <DockHeader title="Layers" />
          <DockTools>
            <DockButton aria-label="Layer Styling"><Glyph name="styling" size={15} /></DockButton>
            <DockButton aria-label="Add Group"><Glyph name="addGroup" size={14} /></DockButton>
            <DockButton aria-label="Manage Map Themes"><Glyph name="eye" size={16} /></DockButton>
            <DockButton aria-label="Filter Legend"><Glyph name="filterMenu" size={14} /></DockButton>
            <DockButton aria-label="Filter Legend by Expression" disabled $menu>
              <Glyph name="filterExpr" size={14} />
              <Triangle $tone="#777" />
            </DockButton>
            <DockButton aria-label="Expand All"><Glyph name="expand" size={15} /></DockButton>
            <DockButton aria-label="Collapse All"><Glyph name="collapse" size={15} /></DockButton>
            <DockButton aria-label="Remove Layer"><Glyph name="removeLayer" size={14} /></DockButton>
          </DockTools>
          <LayersBox />
        </Dock>

        <Column $grow={453}>
          <ColumnHeading>Recent Projects</ColumnHeading>
          <Panel>
            <ProjectList>
              {projects.map((p) => (
                <li key={p.name}>
                  <ItemTitle>{p.name}</ItemTitle>
                  <ItemText>
                    /Users/lucyschick/Projects/gis/{p.name}/<br />
                    {p.name}.{p.ext}
                  </ItemText>
                  <ItemText>EPSG:3005 (EPSG:3005 - NAD83 / BC Albers)</ItemText>
                </li>
              ))}
            </ProjectList>
            <HorizontalBar />
          </Panel>
        </Column>

        <Grip $vertical>{[0, 1, 2, 3, 4, 5].map((n) => <i key={n} />)}</Grip>

        <Column $grow={677}>
          <Grip>{[0, 1, 2, 3, 4, 5].map((n) => <i key={n} />)}</Grip>
          <ColumnHeading>Project Templates</ColumnHeading>
          <Panel>
            <Template>
              <Preview>
                <svg viewBox="0 0 211 138">
                  <rect x=".5" y=".5" width="210" height="137" fill="none" stroke="#c8c8c8" strokeDasharray="4 2" />
                </svg>
              </Preview>
              <div>
                <ItemTitle>New Empty Project</ItemTitle>
                <ItemText>EPSG:4326 - WGS 84</ItemText>
              </div>
            </Template>
          </Panel>
        </Column>
      </WorkArea>

      <StatusBar>
        <Locator>
          <svg width="14" height="14" viewBox="0 0 14 14" fill="none" stroke="#a5a5a5" aria-hidden="true">
            <circle cx="5.500" cy="5.500" r="4.300" strokeWidth="1.200" />
            <path d="M8.800 8.800l4 4" strokeWidth="1.600" />
          </svg>
          <input aria-label="Locator" placeholder="Type to locate (⌘K)" />
        </Locator>
        <span>Ready</span>
        <Spacer />
        <Field $gap={14}>
          <label htmlFor="coordinate">Coordinate</label>
          <CoordinateInput id="coordinate" />
          <StatusButton aria-label="Toggle Extents" $gap={0}>
            <svg width="16" height="16" viewBox="0 0 16 16" aria-hidden="true">
              <path d="M1 2.500l2-1.500 3.500 4.500L7 .8l2 .4.500 5L14 8.500c2 2 1.500 5-.5 6.200-2.500 1-5 .5-6-1.200L3 7.500z" fill="#e6e6e6" stroke="#111" strokeWidth=".8" />
              <path d="M3 3l4 5M1 8l5 4M11 1l1 3M13 4l2-2M8 3v4" stroke="#111" />
              <circle cx="10.500" cy="11" r="2.200" fill="#fff" stroke="#111" />
            </svg>
          </StatusButton>
        </Field>
        <Field $gap={10}>
          <label htmlFor="scale">Scale</label>
          <FieldBox $w={87}>
            <select id="scale"><option>1:22390718</option></select>
            <ArrowCap><Triangle /></ArrowCap>
          </FieldBox>
        </Field>
        <StatusButton aria-label="Lock Scale" $gap={9}>
          <svg width="16" height="16" viewBox="0 0 16 16" aria-hidden="true">
            <path d="M4.500 8V5a3.500 3.500 0 0 1 7 0v3" fill="none" stroke="#b5b5b5" strokeWidth="1.700" />
            <rect x="2" y="7" width="12" height="8.500" rx="1" fill="#777" />
          </svg>
        </StatusButton>
        <Field $gap={10}>
          <label htmlFor="magnifier">Magnifier</label>
          <FieldBox $w={92}>
            <input id="magnifier" defaultValue="100%" />
            <Stepper />
          </FieldBox>
        </Field>
        <Field $gap={7} $inner={11}>
          <label htmlFor="rotation">Rotation</label>
          <FieldBox $w={92} $indent={6}>
            <input id="rotation" defaultValue="0.0 °" />
            <Stepper />
          </FieldBox>
        </Field>
        <Check>
          <input type="checkbox" defaultChecked />
          Render
        </Check>
        <StatusButton $gap={23}>
          <svg width="14" height="14" viewBox="0 0 14 14" fill="none" stroke="#666" aria-hidden="true">
            <circle cx="7" cy="7" r="6" fill="#c4c4c4" stroke="#aaa" />
            <path d="M0 5h14M0 9h14M4.500 1.500c-1 4-1 7 0 11M9.500 1.500c1 4 1 7 0 11" strokeWidth=".8" />
          </svg>
          EPSG:4326
        </StatusButton>
        <StatusButton aria-label="Messages" $gap={0}>
          <svg width="16" height="16" viewBox="0 0 16 16" aria-hidden="true">
            <path d="M8 1c4.500 0 8 2.500 8 6 0 2-1 3.500-2.500 4.500L15 15l-5-2.200C4 13.500 0 11 0 7s3.500-6 8-6z" fill="#858585" />
            <path d="M3.500 6h2v2h-2zM7 6h2v2H7zM10.500 6h2v2h-2z" fill="#fff" />
          </svg>
        </StatusButton>
      </StatusBar>
    </Window>
  );
}
